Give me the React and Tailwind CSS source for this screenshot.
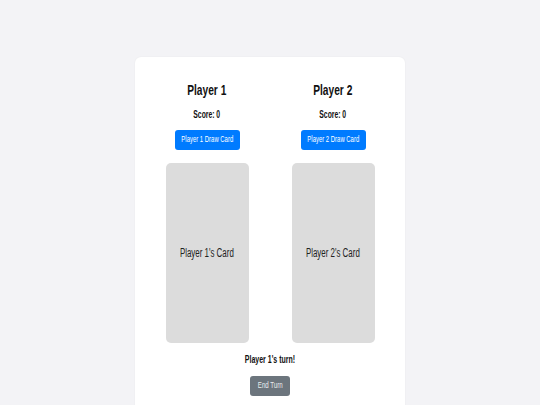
import { useState } from 'react'

const FONT = { fontFamily: '"Liberation Sans", Arial, sans-serif' }

function Squeezed({ children, className = 'scale-x-[0.72]' }) {
  return <span className={`inline-block origin-center whitespace-nowrap ${className}`}>{children}</span>
}

function PlayerColumn({ name, score, onDraw }) {
  return (
    <div className="flex w-[83px] flex-col items-center">
      <h2 className="flex h-[16px] w-[120px] items-center justify-center text-[15px] leading-[16px] font-bold text-[#111]">
        <Squeezed className="scale-x-[0.68]">{name}</Squeezed>
      </h2>
      <p className="mt-[11px] flex h-[12px] w-[120px] items-center justify-center text-[10px] leading-[12px] font-bold text-[#111]">
        <Squeezed className="scale-x-[0.68]">Score: {score}</Squeezed>
      </p>
      <button
        type="button"
        onClick={onDraw}
        className="mt-[9px] flex h-[20px] w-[65px] items-center justify-center rounded-[3px] bg-[#007bff] text-[9px] text-white"
      >
        <Squeezed className="scale-x-[0.66]">{name} Draw Card</Squeezed>
      </button>
      <div className="mt-[13px] flex h-[180px] w-[83px] items-center justify-center rounded-[5px] bg-[#dcdcdc] text-[12px] text-[#222]">
        <Squeezed className="scale-x-[0.66]">{name}'s Card</Squeezed>
      </div>
    </div>
  )
}

export default function App() {
  const [scores] = useState({ p1: 0, p2: 0 })

  return (
    <div className="min-h-[405px] bg-[#f3f3f6] pt-[57px]" style={FONT}>
      <div className="mx-auto flex w-[270px] flex-col items-center rounded-t-[6px] bg-white pt-[25px] pb-[20px] shadow-[0_0_2px_rgba(0,0,0,0.06)]">
        <div className="flex gap-[43px]">
          <PlayerColumn name="Player 1" score={scores.p1} />
          <PlayerColumn name="Player 2" score={scores.p2} />
        </div>
        <p className="mt-[11px] flex h-[12px] items-center justify-center text-[10px] leading-[12px] font-bold text-[#111]">
          <Squeezed className="scale-x-[0.7]">Player 1's turn!</Squeezed>
        </p>
        <button
          type="button"
          className="mt-[10px] flex h-[20px] w-[40px] items-center justify-center rounded-[3px] bg-[#6c757d] text-[9px] text-[#e9ecef]"
        >
          <Squeezed className="scale-x-[0.68]">End Turn</Squeezed>
        </button>
      </div>
    </div>
  )
}
